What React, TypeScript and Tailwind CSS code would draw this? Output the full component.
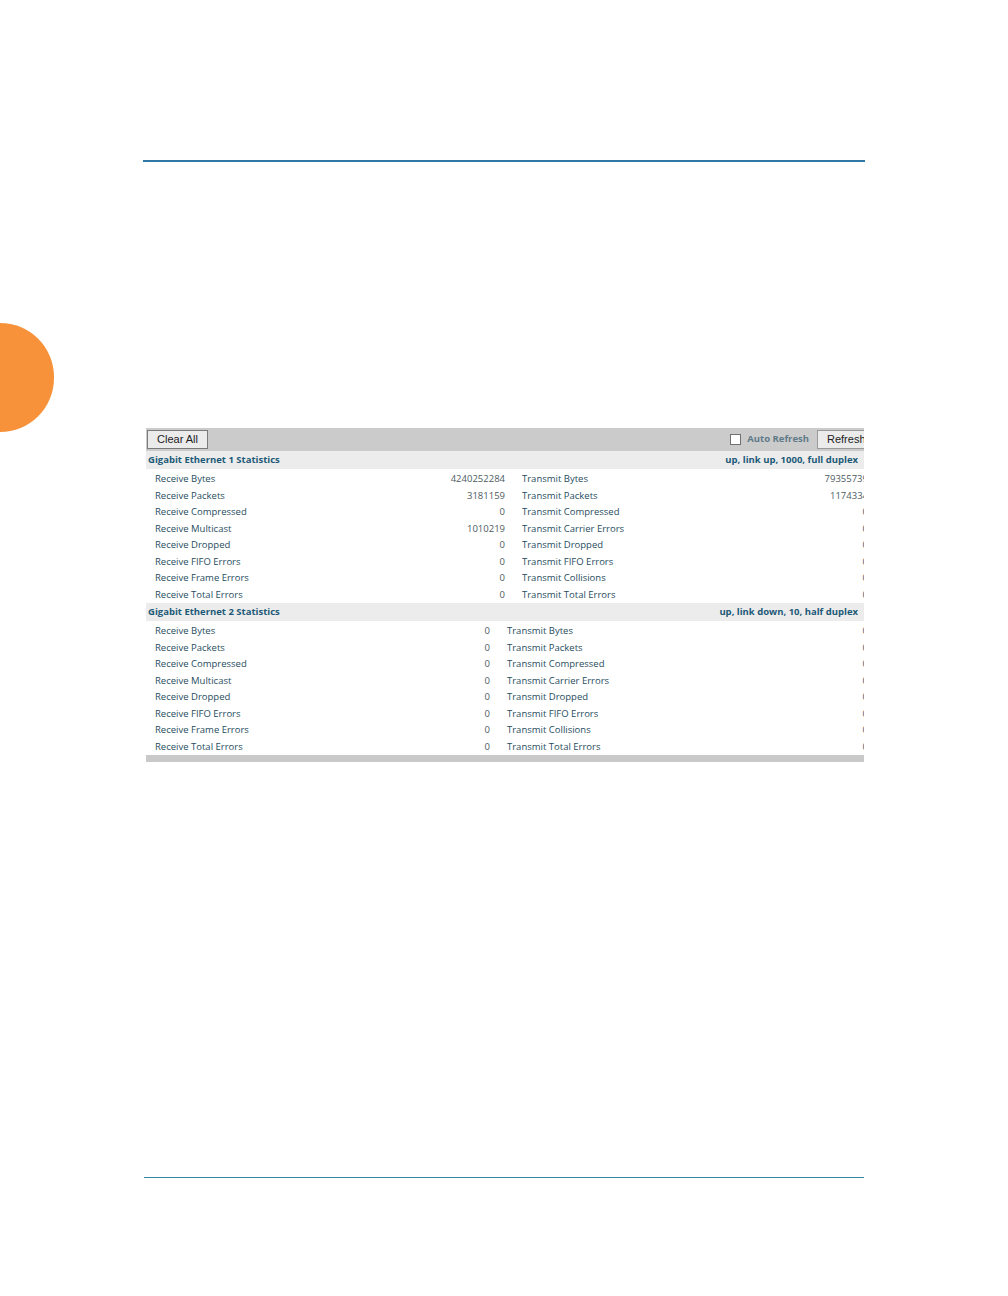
import React from "react";

type Row = [string, string, string, string];

const eth1: Row[] = [
  ["Receive Bytes", "4240252284", "Transmit Bytes", "79355739"],
  ["Receive Packets", "3181159", "Transmit Packets", "1174334"],
  ["Receive Compressed", "0", "Transmit Compressed", "0"],
  ["Receive Multicast", "1010219", "Transmit Carrier Errors", "0"],
  ["Receive Dropped", "0", "Transmit Dropped", "0"],
  ["Receive FIFO Errors", "0", "Transmit FIFO Errors", "0"],
  ["Receive Frame Errors", "0", "Transmit Collisions", "0"],
  ["Receive Total Errors", "0", "Transmit Total Errors", "0"],
];

const eth2: Row[] = [
  ["Receive Bytes", "0", "Transmit Bytes", "0"],
  ["Receive Packets", "0", "Transmit Packets", "0"],
  ["Receive Compressed", "0", "Transmit Compressed", "0"],
  ["Receive Multicast", "0", "Transmit Carrier Errors", "0"],
  ["Receive Dropped", "0", "Transmit Dropped", "0"],
  ["Receive FIFO Errors", "0", "Transmit FIFO Errors", "0"],
  ["Receive Frame Errors", "0", "Transmit Collisions", "0"],
  ["Receive Total Errors", "0", "Transmit Total Errors", "0"],
];

function Header({ title, status }: { title: string; status: string }) {
  return (
    <div className="flex h-[18px] items-center justify-between bg-[#ececec] pl-[2px] pr-[12px] text-[9.5px] font-bold text-[#1d5a78]">
      <span>{title}</span>
      <span>{status}</span>
    </div>
  );
}

function Rows({ rows, labelW }: { rows: Row[]; labelW: string }) {
  return (
    <div className="pt-[2px]">
      {rows.map((r, i) => (
        <div key={i} className="flex h-[16.5px] items-center pl-[9px] pr-[2px] text-[9.5px]">
          <span className={`${labelW} shrink-0 text-[#1f4d60]`}>{r[0]}</span>
          <span className="w-[60px] shrink-0 text-right text-[#4d5b61]">{r[1]}</span>
          <span className="flex-1 pl-[17px] text-[#1f4d60]">{r[2]}</span>
          <span className="shrink-0 text-right text-[#4d5b61]">{r[3]}</span>
        </div>
      ))}
    </div>
  );
}

export default function App() {
  return (
    <div
      className="relative h-[1296px] w-[1008px] overflow-hidden bg-white"
      style={{ fontFamily: '"Open Sans", "Noto Sans", sans-serif' }}
    >
      <div className="absolute left-[-54px] top-[323px] h-[109px] w-[108px] rounded-full bg-[#f7923a]" />

      <div className="pt-[160px]">
        <div className="ml-[143px] h-[2px] w-[722px] bg-[#2e78a3]" />
      </div>

      <div className="ml-[146px] mt-[266px] w-[718px] overflow-hidden">
        <div className="w-[724px]">
          <div className="flex h-[23px] items-center justify-between bg-[#cbcbcb] pl-px">
            <button
              className="h-[19px] w-[61px] border border-[#7a7a7a] bg-[#ebebeb] text-[11px] text-[#222]"
              style={{ fontFamily: '"Liberation Sans", Arial, sans-serif' }}
            >
              Clear All
            </button>
            <div className="flex items-center">
              <span className="mr-[6px] h-[11px] w-[11px] border border-[#707070] bg-white" />
              <span className="mr-[8px] text-[9.5px] font-bold text-[#5f7a88]">Auto Refresh</span>
              <button
                className="h-[19px] w-[53px] overflow-hidden whitespace-nowrap border border-[#9a9a9a] bg-[#ebebeb] pl-[9px] text-left text-[11px] text-[#222]"
                style={{ fontFamily: '"Liberation Sans", Arial, sans-serif' }}
              >
                Refresh
              </button>
            </div>
          </div>
          <Header title="Gigabit Ethernet 1 Statistics" status="up, link up, 1000, full duplex" />
          <Rows rows={eth1} labelW="w-[290px]" />
          <Header title="Gigabit Ethernet 2 Statistics" status="up, link down, 10, half duplex" />
          <Rows rows={eth2} labelW="w-[275px]" />
          <div className="h-[7px] bg-[#c9c9c9]" />
        </div>
      </div>

      <div className="ml-[144px] mt-[415px] h-px w-[720px] bg-[#3a86a0]" />
    </div>
  );
}
